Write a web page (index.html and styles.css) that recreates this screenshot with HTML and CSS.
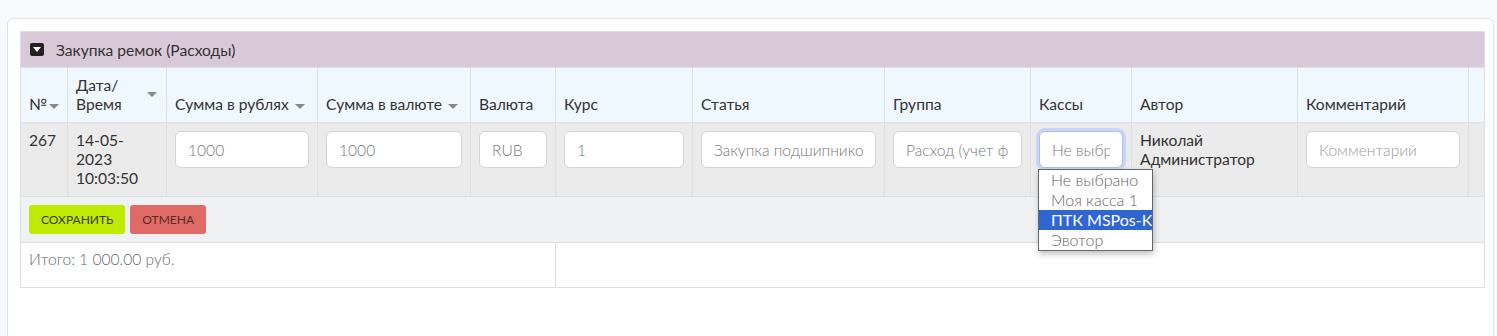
FILE: index.html
```html
<!DOCTYPE html>
<html lang="ru">
<head>
  <meta charset="UTF-8">
  <title>Закупка ремок (Расходы)</title>
  <link rel="stylesheet" href="styles.css">
</head>
<body>
  <div class="card">
    <div class="group-title">
      <span class="toggle"></span>
      Закупка ремок (Расходы)
    </div>
    <table class="grid">
      <colgroup>
        <col style="width:47px"><col style="width:99px"><col style="width:151px"><col style="width:153px">
        <col style="width:85px"><col style="width:137px"><col style="width:192px"><col style="width:146px">
        <col style="width:101px"><col style="width:166px"><col style="width:171px"><col>
      </colgroup>
      <thead>
        <tr>
          <th>№<span class="sort"></span></th>
          <th class="th-date">Дата/<br>Время<span class="sort sort-top"></span></th>
          <th>Сумма в рублях <span class="sort"></span></th>
          <th>Сумма в валюте <span class="sort"></span></th>
          <th>Валюта</th>
          <th>Курс</th>
          <th>Статья</th>
          <th>Группа</th>
          <th>Кассы</th>
          <th>Автор</th>
          <th>Комментарий</th>
          <th></th>
        </tr>
      </thead>
      <tbody>
        <tr class="edit-row">
          <td>267</td>
          <td>14-05-<br>2023<br>10:03:50</td>
          <td><input class="field" value="1000"></td>
          <td><input class="field" value="1000"></td>
          <td><input class="field" value="RUB"></td>
          <td><input class="field" value="1"></td>
          <td><input class="field" value="Закупка подшипников"></td>
          <td><input class="field" value="Расход (учет финансов)"></td>
          <td class="kassa-cell">
            <input class="field focused" value="Не выбрано">
            <ul class="dropdown">
              <li>Не выбрано</li>
              <li>Моя касса 1</li>
              <li class="active">ПТК MSPos-K</li>
              <li>Эвотор</li>
            </ul>
          </td>
          <td>Николай<br>Администратор</td>
          <td><input class="field" placeholder="Комментарий"></td>
          <td></td>
        </tr>
        <tr class="actions-row">
          <td colspan="12">
            <button class="btn btn-save">СОХРАНИТЬ</button>
            <button class="btn btn-cancel">ОТМЕНА</button>
          </td>
        </tr>
        <tr class="total-row">
          <td colspan="5">Итого: 1 000.00 руб.</td>
          <td colspan="7"></td>
        </tr>
      </tbody>
    </table>
  </div>
</body>
</html>
```

FILE: styles.css
```css
body {
  margin: 0;
  padding: 18px 3px 0 7px;
  background-color: #f8f9fa;
  font-family: 'Lato', 'Open Sans', sans-serif;
  font-size: 15.6px;
  color: #333;
  overflow: hidden;
}
.card {
  background: white;
  border: 1px solid #dee2e6;
  border-radius: 6px;
  padding: 12px 8px 80px 12px;
}
.group-title {
  background-color: #d8cad9;
  height: 35px;
  display: flex;
  align-items: center;
  padding-left: 9px;
  gap: 12px;
  font-size: 15.6px;
  color: #333;
  border: 1px solid #dcdfe3;
  border-bottom: none;
}
.toggle {
  width: 14px;
  height: 13px;
  background: #222;
  border-radius: 2px;
  position: relative;
}
.toggle::after {
  content: '';
  position: absolute;
  left: 3px;
  top: 4px;
  border-left: 4px solid transparent;
  border-right: 4px solid transparent;
  border-top: 5px solid white;
}
.grid {
  width: 1465px;
  border-collapse: collapse;
  table-layout: fixed;
}
.grid th, .grid td {
  border: 1px solid #dcdfe3;
  padding: 8px;
  text-align: left;
  vertical-align: top;
  line-height: 19px;
}
.grid th {
  background-color: #eff7ff;
  font-weight: normal;
  vertical-align: bottom;
  height: 38px;
  white-space: nowrap;
}
.th-date {
  position: relative;
}
.sort {
  display: inline-block;
  border-left: 5px solid transparent;
  border-right: 5px solid transparent;
  border-top: 5px solid #888;
  vertical-align: middle;
  margin-left: 2px;
}
.sort-top {
  position: absolute;
  right: 9px;
  top: 24px;
}
.edit-row td {
  background-color: #ebebeb;
  height: 56px;
}
.field {
  width: 100%;
  box-sizing: border-box;
  height: 37px;
  padding: 6px 12px;
  border: 1px solid #d4d4d4;
  border-radius: 6px;
  background: white;
  font-family: inherit;
  font-size: 15.6px;
  font-weight: 300;
  color: #777;
}
.field::placeholder {
  color: #999;
}
.field.focused {
  border-color: #a8c0f0;
  box-shadow: 0 0 0 3px #c7d6f7;
}
.kassa-cell {
  position: relative;
}
.dropdown {
  position: absolute;
  left: 7px;
  top: 46px;
  width: 113px;
  margin: 0;
  padding: 0;
  list-style: none;
  background: white;
  border: 1px solid #666;
  box-shadow: 1px 3px 6px rgba(0,0,0,0.25);
  z-index: 2;
}
.dropdown li {
  padding: 0 12px 0 12px;
  height: 20px;
  line-height: 20px;
  font-size: 16px;
  font-weight: 300;
  color: #666;
  white-space: nowrap;
  overflow: hidden;
}
.dropdown li.active {
  background-color: #2f66d3;
  color: white;
  font-weight: normal;
}
.actions-row td {
  background-color: #f0f1f2;
  padding: 8px;
  height: 29px;
}
.btn {
  height: 29px;
  border: none;
  border-radius: 3px;
  padding: 0 12px;
  font-family: inherit;
  font-size: 12px;
  color: #3a3a2a;
  margin-right: 1px;
  cursor: pointer;
}
.btn-save {
  background-color: #c0ea00;
}
.btn-cancel {
  background-color: #e06a66;
  color: #5a2a28;
}
.total-row td {
  background: white;
  height: 29px;
  padding-top: 7px;
  font-weight: 300;
  color: #666;
}
```
